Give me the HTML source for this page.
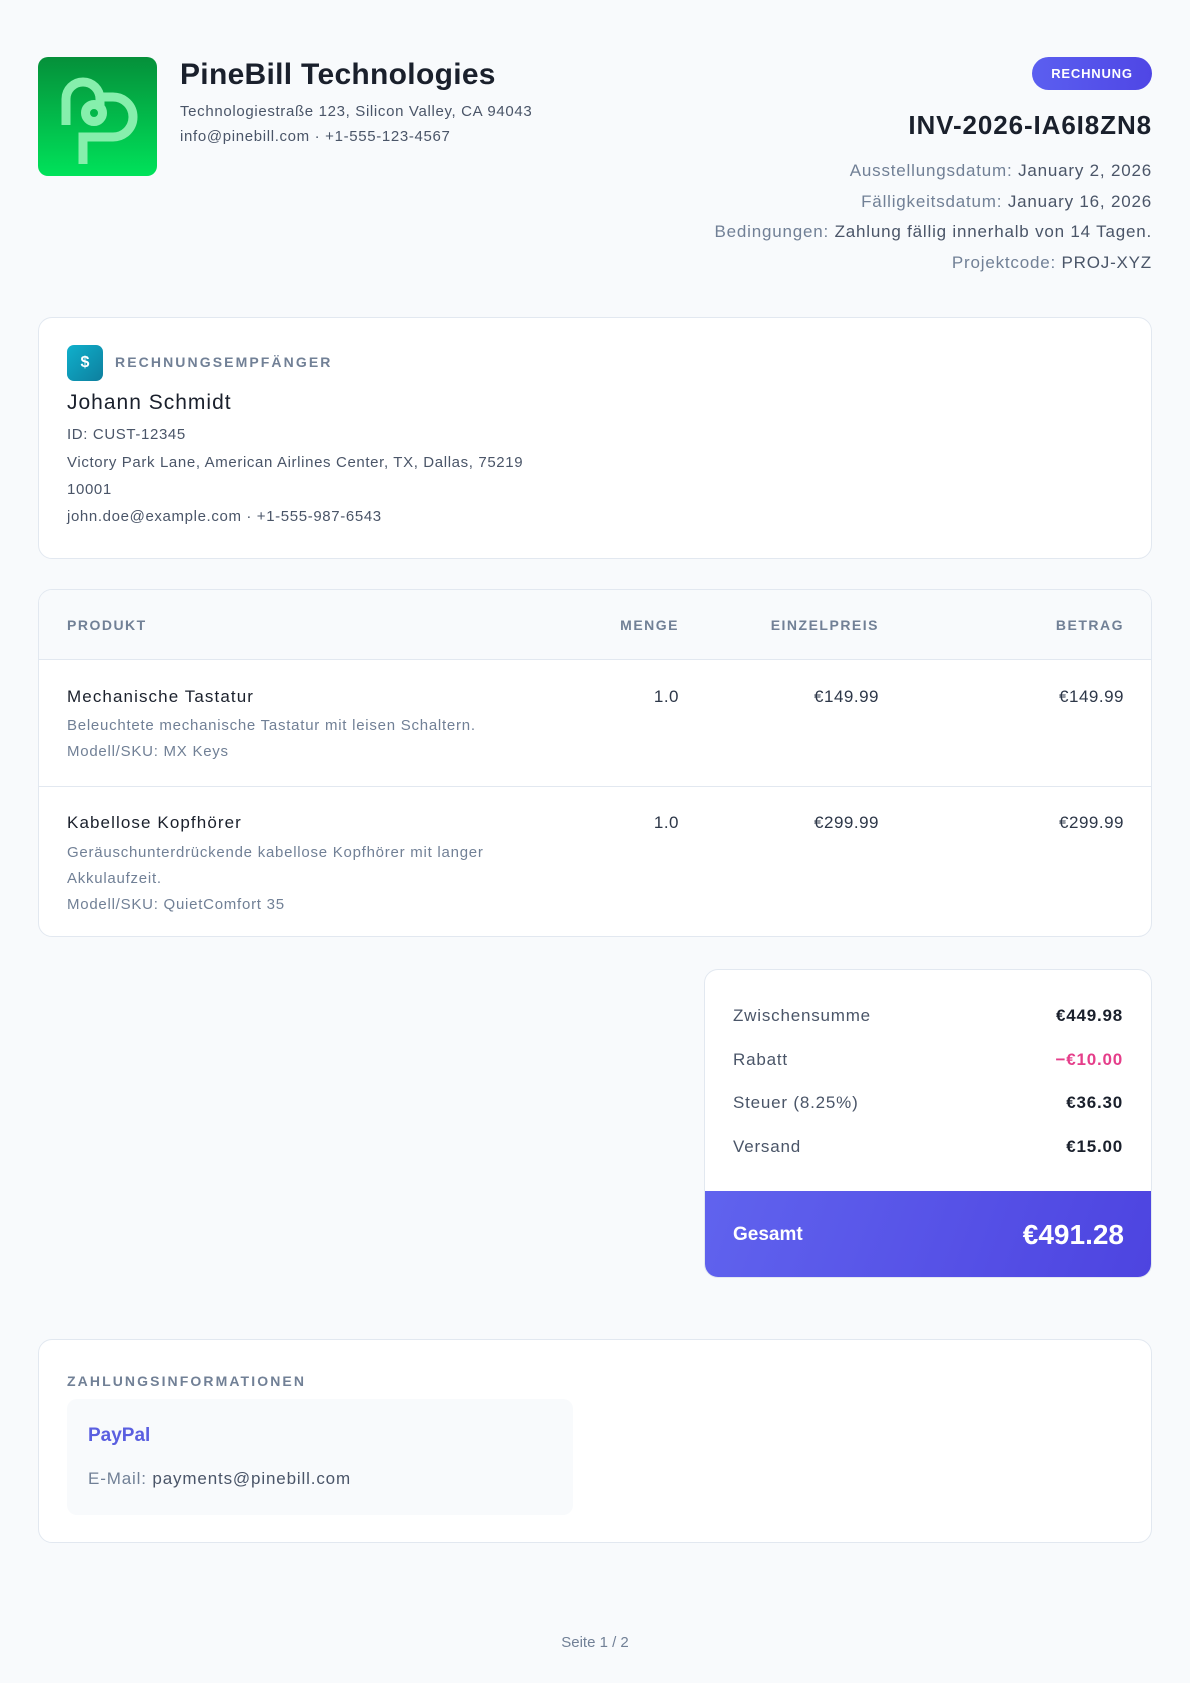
<!DOCTYPE html>
<html><head><meta charset="utf-8"><style>
*{margin:0;padding:0;box-sizing:border-box}
body{width:1190px;height:1683px;background:#f8fafc;font-family:"Liberation Sans",sans-serif;position:relative;overflow:hidden;color:#1a202c}
.abs{position:absolute}
.card{position:absolute;background:#fff;border:1.5px solid #e2e8f0;border-radius:14px;overflow:hidden}
.lbl{font-size:14px;font-weight:bold;letter-spacing:2.1px;color:#718096}
.meta{position:absolute;right:38px;font-size:17px;letter-spacing:.8px;color:#718096;text-align:right;white-space:nowrap}
.meta b{font-weight:normal;color:#4a5568}
.line{position:absolute;left:28px;font-size:15px;letter-spacing:.63px;color:#4a5568;white-space:nowrap}
.th{position:absolute;top:34.5px;line-height:0;font-size:14px;font-weight:bold;letter-spacing:1.5px;color:#718096}
.v{position:absolute;font-size:17px;letter-spacing:.5px;color:#2d3748;line-height:0}
.t{position:absolute;left:28px;font-size:17px;letter-spacing:1.1px;color:#1a202c;line-height:0}
.d{position:absolute;left:28px;font-size:15px;letter-spacing:.75px;color:#718096;line-height:0;white-space:nowrap}
.tr{position:absolute;left:28px;right:28px;line-height:0;font-size:17px;letter-spacing:.8px}
.tr span:first-child{color:#4a5568}
.tr span:last-child{position:absolute;right:0;font-weight:bold;color:#1a202c}
</style></head><body>
<div class="abs" style="left:38px;top:57px;width:119px;height:119px;border-radius:10px;background:linear-gradient(180deg,#05903a,#00e25a)">
<svg width="119" height="119" viewBox="0 0 119 119" fill="none" stroke="#86efac" stroke-width="9" stroke-linecap="butt">
<path d="M28 68 V42 A17 17 0 0 1 62 42 V48"/>
<circle cx="56" cy="56" r="8.5"/>
<path d="M45 107 V80 H75 A20 20 0 0 0 75 40 H64"/>
</svg></div>
<div class="abs" style="left:180px;top:57px;font-size:30px;font-weight:bold;letter-spacing:.3px;color:#1a202c;line-height:36px">PineBill Technologies</div>
<div class="abs" style="left:180px;top:100px;font-size:15px;letter-spacing:.66px;color:#4a5568;line-height:24.6px">Technologiestraße 123, Silicon Valley, CA 94043<br>info@pinebill.com · +1-555-123-4567</div>

<div class="abs" style="left:1032px;top:57px;width:120px;height:33px;border-radius:17px;background:linear-gradient(90deg,#5b5ff0,#4f46e5);color:#fff;font-size:13px;font-weight:bold;letter-spacing:.8px;text-align:center;line-height:33px">RECHNUNG</div>
<div class="abs" style="right:38px;top:108px;font-size:26px;font-weight:bold;letter-spacing:.9px;color:#1a202c;line-height:34px">INV-2026-IA6I8ZN8</div>
<div class="meta" style="top:161px">Ausstellungsdatum: <b>January 2, 2026</b></div>
<div class="meta" style="top:192px">Fälligkeitsdatum: <b>January 16, 2026</b></div>
<div class="meta" style="top:222px">Bedingungen: <b>Zahlung fällig innerhalb von 14 Tagen.</b></div>
<div class="meta" style="top:253px">Projektcode: <b>PROJ-XYZ</b></div>

<div class="card" style="left:38px;top:317px;width:1114px;height:242px">
<div class="abs" style="left:28px;top:27px;width:36px;height:36px;border-radius:7px;background:linear-gradient(135deg,#0fb0cc,#0e7f9e);color:#fff;font-weight:bold;font-size:16px;text-align:center;line-height:36px">$</div>
<div class="abs lbl" style="left:76px;top:36px">RECHNUNGSEMPFÄNGER</div>
<div class="abs" style="left:28px;top:73px;font-size:21px;letter-spacing:1px;color:#1a202c">Johann Schmidt</div>
<div class="line" style="top:108px">ID: CUST-12345</div>
<div class="line" style="top:136px">Victory Park Lane, American Airlines Center, TX, Dallas, 75219</div>
<div class="line" style="top:163px">10001</div>
<div class="line" style="top:190px">john.doe@example.com · +1-555-987-6543</div>
</div>

<div class="card" style="left:38px;top:589px;width:1114px;height:348px">
<div class="abs" style="left:0;top:0;right:0;height:70px;background:#f8fafc;border-bottom:1.5px solid #e2e8f0"></div>
<div class="th" style="left:28px">PRODUKT</div>
<div class="th" style="right:472px">MENGE</div>
<div class="th" style="right:272px">EINZELPREIS</div>
<div class="th" style="right:27px">BETRAG</div>
<div class="t" style="top:107px">Mechanische Tastatur</div>
<div class="d" style="top:136px">Beleuchtete mechanische Tastatur mit leisen Schaltern.</div>
<div class="d" style="top:162px">Modell/SKU: MX Keys</div>
<div class="v" style="top:107px;right:472px">1.0</div>
<div class="v" style="top:107px;right:272px">€149.99</div>
<div class="v" style="top:107px;right:27px">€149.99</div>
<div class="abs" style="left:0;right:0;top:196px;border-top:1.5px solid #e2e8f0"></div>
<div class="t" style="top:233px">Kabellose Kopfhörer</div>
<div class="d" style="top:263px">Geräuschunterdrückende kabellose Kopfhörer mit langer</div>
<div class="d" style="top:289px">Akkulaufzeit.</div>
<div class="d" style="top:315px">Modell/SKU: QuietComfort 35</div>
<div class="v" style="top:233px;right:472px">1.0</div>
<div class="v" style="top:233px;right:272px">€299.99</div>
<div class="v" style="top:233px;right:27px">€299.99</div>
</div>

<div class="card" style="left:704px;top:969px;width:448px;height:309px">
<div class="tr" style="top:46px"><span>Zwischensumme</span><span>€449.98</span></div>
<div class="tr" style="top:90px"><span>Rabatt</span><span style="color:#e53e8a">−€10.00</span></div>
<div class="tr" style="top:133px"><span>Steuer (8.25%)</span><span>€36.30</span></div>
<div class="tr" style="top:177px"><span>Versand</span><span>€15.00</span></div>
<div class="abs" style="left:0;right:0;top:221px;bottom:0;background:linear-gradient(110deg,#6063ee,#5550e6 60%,#4d44e0)">
<div class="abs" style="left:28px;top:44px;line-height:0;color:#fff;font-weight:bold;font-size:19px">Gesamt</div>
<div class="abs" style="right:27px;top:44px;line-height:0;color:#fff;font-weight:bold;font-size:28px">€491.28</div>
</div>
</div>

<div class="card" style="left:38px;top:1339px;width:1114px;height:204px">
<div class="abs lbl" style="left:28px;top:33px">ZAHLUNGSINFORMATIONEN</div>
<div class="abs" style="left:28px;top:59px;width:506px;height:116px;background:#f8fafc;border-radius:10px">
<div class="abs" style="left:21px;top:37px;line-height:0;font-size:19px;font-weight:bold;color:#5a5fe0">PayPal</div>
<div class="abs" style="left:21px;top:80px;line-height:0;font-size:17px;letter-spacing:.85px;color:#718096">E-Mail: <span style="color:#4a5568">payments@pinebill.com</span></div>
</div>
</div>

<div class="abs" style="left:0;right:0;top:1643px;line-height:0;text-align:center;font-size:15px;color:#718096">Seite 1 / 2</div>
</body></html>
